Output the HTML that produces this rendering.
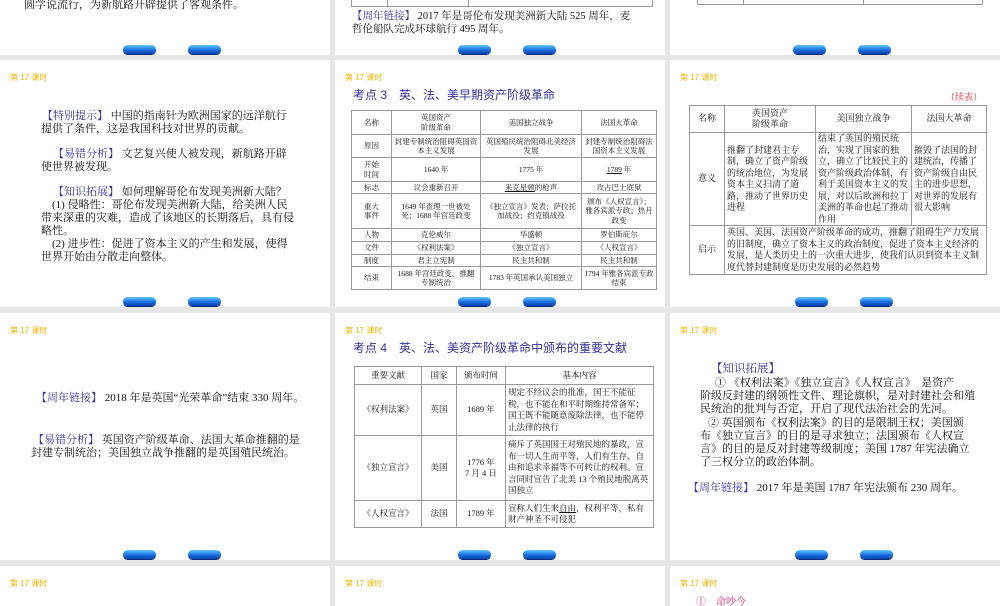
<!DOCTYPE html>
<html><head><meta charset="utf-8"><style>
*{margin:0;padding:0;box-sizing:border-box}
body{width:1000px;height:600px;background:#e6e6e6;position:relative;overflow:hidden;font-family:"Liberation Serif","Noto Serif CJK SC","Noto Sans CJK SC",serif;color:#111}
.s{position:absolute;background:#fff;overflow:hidden}
.h{position:absolute;left:10px;top:12px;font-size:8px;color:#f0b400;font-family:"Liberation Sans","Noto Sans CJK SC",sans-serif}
.b{position:absolute;width:33px;height:9px;border-radius:5px;background:linear-gradient(#5ec8ff,#1a6fe0 55%,#0b3fa8);box-shadow:0 1px 0 #0a2a7a}
.t{position:absolute;font-size:11px;line-height:13px;white-space:nowrap}
.l{color:#33339a}
.ti{position:absolute;font-size:12px;color:#33339a;font-family:"Liberation Sans","Noto Sans CJK SC",sans-serif;white-space:nowrap}
table{position:absolute;border-collapse:collapse;table-layout:fixed}
td{border:1px solid #999;text-align:center;vertical-align:middle;padding:0 2px;overflow:hidden}
.t1 td{font-size:7.5px;line-height:9.5px}
.t2 td{font-size:9px;line-height:11.5px}
.t3 td{font-size:8.5px;line-height:11.5px}
u{text-decoration:underline}
</style></head><body>

<!-- row 0 -->
<div class="s" style="left:0;top:0;width:330px;height:55px">
<div class="t" style="left:24px;top:-1px">圆学说流行，为新航路开辟提供了客观条件。</div>
<div class="b" style="left:123px;top:45px"></div><div class="b" style="left:188px;top:45px"></div>
</div>
<div class="s" style="left:335px;top:0;width:330px;height:55px">
<div style="position:absolute;left:16px;top:-2px;width:302px;height:9px;border:1px solid #999;border-top:none"></div>
<div style="position:absolute;left:52px;top:0;width:1px;height:7px;background:#999"></div>
<div style="position:absolute;left:133px;top:0;width:1px;height:7px;background:#999"></div>
<div class="t" style="left:17px;top:10px;font-size:10.5px"><span class="l">【周年链接】</span> 2017 年是哥伦布发现美洲新大陆 525 周年，麦</div>
<div class="t" style="left:17px;top:23px;font-size:10.5px">哲伦船队完成环球航行 495 周年。</div>
<div class="b" style="left:123px;top:45px"></div><div class="b" style="left:188px;top:45px"></div>
</div>
<div class="s" style="left:670px;top:0;width:330px;height:55px">
<div style="position:absolute;left:27px;top:-2px;width:286px;height:7px;border:1px solid #999;border-top:none"></div>
<div style="position:absolute;left:73px;top:0;width:1px;height:5px;background:#999"></div>
<div style="position:absolute;left:193px;top:0;width:1px;height:5px;background:#999"></div>
<div class="b" style="left:123px;top:45px"></div><div class="b" style="left:188px;top:45px"></div>
</div>

<!-- row 1 -->
<div class="s" style="left:0;top:60px;width:330px;height:247px">
<div class="h">第 17 课时</div>
<div class="t" style="left:42px;top:50px"><span class="l">【特别提示】</span> 中国的指南针为欧洲国家的远洋航行</div>
<div class="t" style="left:41px;top:63px">提供了条件，这是我国科技对世界的贡献。</div>
<div class="t" style="left:53px;top:88px"><span class="l">【易错分析】</span> 文艺复兴使人被发现，新航路开辟</div>
<div class="t" style="left:41px;top:101px">使世界被发现。</div>
<div class="t" style="left:53px;top:126px"><span class="l">【知识拓展】</span> 如何理解哥伦布发现美洲新大陆？</div>
<div class="t" style="left:52px;top:139px">(1) 侵略性：哥伦布发现美洲新大陆，给美洲人民</div>
<div class="t" style="left:41px;top:152px">带来深重的灾难，造成了该地区的长期落后，具有侵</div>
<div class="t" style="left:41px;top:165px">略性。</div>
<div class="t" style="left:52px;top:178px">(2) 进步性：促进了资本主义的产生和发展，使得</div>
<div class="t" style="left:41px;top:191px">世界开始由分散走向整体。</div>
<div class="b" style="left:123px;top:237px"></div><div class="b" style="left:188px;top:237px"></div>
</div>

<div class="s" style="left:335px;top:60px;width:330px;height:247px">
<div class="h">第 17 课时</div>
<div class="ti" style="left:18px;top:26px">考点 3　英、法、美早期资产阶级革命</div>
<table class="t1" style="left:16px;top:50px;width:305px">
<colgroup><col style="width:40px"><col style="width:89px"><col style="width:101px"><col style="width:75px"></colgroup>
<tr style="height:24px"><td>名称</td><td>英国资产<br>阶级革命</td><td>美国独立战争</td><td>法国大革命</td></tr>
<tr style="height:23px"><td>原因</td><td>封建专制统治阻碍英国资本主义发展</td><td>英国殖民统治阻碍北美经济发展</td><td>封建专制统治阻碍法国资本主义发展</td></tr>
<tr style="height:24px"><td>开始<br>时间</td><td>1640 年</td><td>1775 年</td><td><u>1789</u> 年</td></tr>
<tr style="height:12px"><td>标志</td><td>议会重新召开</td><td><u>来克星顿</u>的枪声</td><td>攻占巴士底狱</td></tr>
<tr style="height:35px"><td>重大<br>事件</td><td>1649 年查理一世被处死；1688 年宫廷政变</td><td>《独立宣言》发表；萨拉托加战役；约克镇战役</td><td>颁布《人权宣言》；雅各宾派专政；热月政变</td></tr>
<tr style="height:13px"><td>人物</td><td>克伦威尔</td><td>华盛顿</td><td>罗伯斯庇尔</td></tr>
<tr style="height:13px"><td>文件</td><td>《权利法案》</td><td>《独立宣言》</td><td>《人权宣言》</td></tr>
<tr style="height:12px"><td>制度</td><td>君主立宪制</td><td>民主共和制</td><td>民主共和制</td></tr>
<tr style="height:23px"><td>结束</td><td>1688 年宫廷政变，推翻专制统治</td><td>1783 年英国承认美国独立</td><td>1794 年雅各宾派专政结束</td></tr>
</table>
<div class="b" style="left:123px;top:237px"></div><div class="b" style="left:188px;top:237px"></div>
</div>

<div class="s" style="left:670px;top:60px;width:330px;height:247px">
<div class="h">第 17 课时</div>
<div class="t" style="left:276px;top:31px;font-size:9px;color:#e0303a">（续表）</div>
<table class="t2" style="left:19px;top:45px;width:297px">
<colgroup><col style="width:35px"><col style="width:91px"><col style="width:96px"><col style="width:75px"></colgroup>
<tr style="height:27px"><td>名称</td><td>英国资产<br>阶级革命</td><td>美国独立战争</td><td>法国大革命</td></tr>
<tr style="height:93px"><td>意义</td><td style="text-align:left">推翻了封建君主专制，确立了资产阶级的统治地位，为发展资本主义扫清了道路，推动了世界历史进程</td><td style="text-align:left">结束了英国的殖民统治，实现了国家的独立，确立了比较民主的资产阶级政治体制，有利于美国资本主义的发展，对以后欧洲和拉丁美洲的革命也起了推动作用</td><td style="text-align:left">摧毁了法国的封建统治，传播了资产阶级自由民主的进步思想，对世界的发展有很大影响</td></tr>
<tr style="height:49px"><td>启示</td><td colspan="3" style="text-align:left">英国、美国、法国资产阶级革命的成功，推翻了阻碍生产力发展的旧制度，确立了资本主义的政治制度，促进了资本主义经济的发展，是人类历史上的一次重大进步，使我们认识到资本主义制度代替封建制度是历史发展的必然趋势</td></tr>
</table>
<div class="b" style="left:125px;top:237px"></div><div class="b" style="left:190px;top:237px"></div>
</div>

<!-- row 2 -->
<div class="s" style="left:0;top:313px;width:330px;height:247px">
<div class="h">第 17 课时</div>
<div class="t" style="left:36px;top:79px"><span class="l">【周年链接】</span> 2018 年是英国“光荣革命”结束 330 周年。</div>
<div class="t" style="left:33px;top:121px"><span class="l">【易错分析】</span> 英国资产阶级革命、法国大革命推翻的是</div>
<div class="t" style="left:31px;top:134px">封建专制统治；美国独立战争推翻的是英国殖民统治。</div>
<div class="b" style="left:123px;top:237px"></div><div class="b" style="left:188px;top:237px"></div>
</div>

<div class="s" style="left:335px;top:313px;width:330px;height:247px">
<div class="h">第 17 课时</div>
<div class="ti" style="left:18px;top:26px">考点 4　英、法、美资产阶级革命中颁布的重要文献</div>
<table class="t3" style="left:19px;top:53px;width:299px">
<colgroup><col style="width:67px"><col style="width:35px"><col style="width:49px"><col style="width:148px"></colgroup>
<tr style="height:18px"><td>重要文献</td><td>国家</td><td>颁布时间</td><td>基本内容</td></tr>
<tr style="height:51px"><td>《权利法案》</td><td>英国</td><td>1689 年</td><td style="text-align:left">规定不经议会的批准，国王不能征税，也不能在和平时期维持常备军；国王既不能随意废除法律，也不能停止法律的执行</td></tr>
<tr style="height:65px"><td>《独立宣言》</td><td>美国</td><td>1776 年<br>7 月 4 日</td><td style="text-align:left">痛斥了英国国王对殖民地的暴政，宣布一切人生而平等，人们有生存、自由和追求幸福等不可转让的权利。宣言同时宣告了北美 13 个殖民地脱离英国独立</td></tr>
<tr style="height:27px"><td>《人权宣言》</td><td>法国</td><td>1789 年</td><td style="text-align:left">宣称人们生来<u>自由</u>，权利平等，私有财产神圣不可侵犯</td></tr>
</table>
<div class="b" style="left:123px;top:237px"></div><div class="b" style="left:188px;top:237px"></div>
</div>

<div class="s" style="left:670px;top:313px;width:330px;height:247px">
<div class="h">第 17 课时</div>
<div class="t" style="left:41px;top:50px;font-size:11.5px"><span class="l">【知识拓展】</span></div>
<div class="t" style="left:45px;top:64px">① 《权利法案》《独立宣言》《人权宣言》　是资产</div>
<div class="t" style="left:30px;top:77px">阶级反封建的纲领性文件、理论旗帜，是对封建社会和殖</div>
<div class="t" style="left:30px;top:90px">民统治的批判与否定，开启了现代法治社会的先河。</div>
<div class="t" style="left:38px;top:104px">② 英国颁布《权利法案》的目的是限制王权；美国颁</div>
<div class="t" style="left:30px;top:117px">布《独立宣言》的目的是寻求独立；法国颁布《人权宣</div>
<div class="t" style="left:30px;top:130px">言》的目的是反对封建等级制度；美国 1787 年宪法确立</div>
<div class="t" style="left:30px;top:143px">了三权分立的政治体制。</div>
<div class="t" style="left:18px;top:169px"><span class="l">【周年链接】</span> 2017 年是美国 1787 年宪法颁布 230 周年。</div>
<div class="b" style="left:125px;top:237px"></div><div class="b" style="left:190px;top:237px"></div>
</div>

<!-- row 3 -->
<div class="s" style="left:0;top:566px;width:330px;height:40px"><div class="h">第 17 课时</div></div>
<div class="s" style="left:335px;top:566px;width:330px;height:40px"><div class="h">第 17 课时</div></div>
<div class="s" style="left:670px;top:566px;width:330px;height:40px"><div class="h">第 17 课时</div>
<div class="t" style="left:26px;top:30px;color:#d0307a;font-size:10px">①　命吵今</div></div>
</body></html>
